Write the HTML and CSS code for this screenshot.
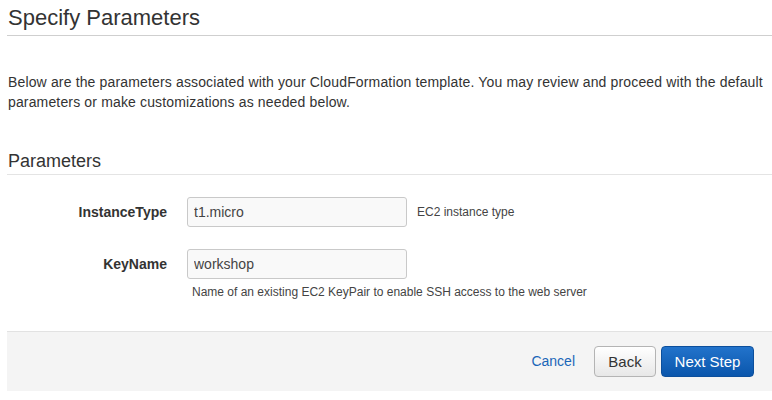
FILE: index.html
```html
<!DOCTYPE html>
<html>
<head>
<meta charset="utf-8">
<link rel="stylesheet" href="styles.css">
</head>
<body>
<div class="page">
  <h1 class="title">Specify Parameters</h1>
  <p class="intro">Below are the parameters associated with your CloudFormation template. You may review and proceed with the default parameters or make customizations as needed below.</p>
  <h2 class="section">Parameters</h2>
  <div class="form">
    <div class="row">
      <label class="label">InstanceType</label>
      <div class="field inline">
        <input class="input" type="text" value="t1.micro">
        <span class="help side">EC2 instance type</span>
      </div>
    </div>
    <div class="row">
      <label class="label">KeyName</label>
      <div class="field">
        <input class="input" type="text" value="workshop">
        <div class="help below">Name of an existing EC2 KeyPair to enable SSH access to the web server</div>
      </div>
    </div>
  </div>
  <div class="footer">
    <a class="cancel" href="#">Cancel</a>
    <button class="btn back">Back</button>
    <button class="btn primary">Next Step</button>
  </div>
</div>
</body>
</html>
```
FILE: styles.css
```css
html, body {
  margin: 0;
  padding: 0;
  background: #fff;
}
body {
  font-family: "Liberation Sans", Arial, sans-serif;
  color: #333;
}
.page {
  padding-left: 7px;
}
.title {
  margin: 0;
  padding: 3px 0 2px 1px;
  font-size: 22px;
  line-height: 30px;
  font-weight: normal;
  color: #333;
  border-bottom: 1px solid #cfcfcf;
}
.intro {
  margin: 36px 0 0 1px;
  font-size: 14px;
  line-height: 20px;
  color: #333;
  letter-spacing: 0.15px;
}
.section {
  margin: 37px 0 0 0;
  padding: 0 0 1px 1px;
  font-size: 18px;
  line-height: 24px;
  font-weight: normal;
  color: #333;
  border-bottom: 1px solid #e4e4e4;
}
.form {
  margin-top: 22px;
  display: flex;
  flex-direction: column;
  gap: 22px;
}
.row {
  display: grid;
  grid-template-columns: 160px auto;
  column-gap: 20px;
  align-items: start;
}
.label {
  text-align: right;
  font-size: 14px;
  font-weight: bold;
  color: #333;
  line-height: 30px;
}
.field.inline {
  display: flex;
  align-items: center;
  gap: 10px;
}
.input {
  box-sizing: border-box;
  width: 220px;
  height: 30px;
  margin: 0;
  padding: 0 6px;
  border: 1px solid #c9c9c9;
  border-radius: 3px;
  background: #f9f9f9;
  font-family: "Liberation Sans", Arial, sans-serif;
  font-size: 14px;
  color: #444;
  outline: none;
}
.help {
  font-size: 12px;
  color: #444;
  line-height: 16px;
}
.help.below {
  margin-top: 5px;
  padding-left: 5px;
}
.footer {
  margin-top: 31px;
  border-top: 1px solid #e2e2e2;
  background: #f4f4f4;
  height: 60px;
  box-sizing: border-box;
  padding: 14px 18px 0 0;
  display: flex;
  justify-content: flex-end;
  align-items: flex-start;
}
.cancel {
  color: #1a66b8;
  text-decoration: none;
  font-size: 14px;
  line-height: 31px;
  margin-right: 19px;
}
.btn {
  box-sizing: border-box;
  height: 31px;
  padding: 0;
  border-radius: 4px;
  font-family: "Liberation Sans", Arial, sans-serif;
  font-size: 15px;
  cursor: pointer;
}
.back {
  width: 62px;
  color: #333;
  border: 1px solid #b4b4b4;
  background: linear-gradient(#ffffff, #e7e7e7);
  margin-right: 5px;
}
.primary {
  width: 93px;
  color: #fff;
  border: 1px solid #0c4f9c;
  background: linear-gradient(#2273cb, #0a56ac);
}
```
